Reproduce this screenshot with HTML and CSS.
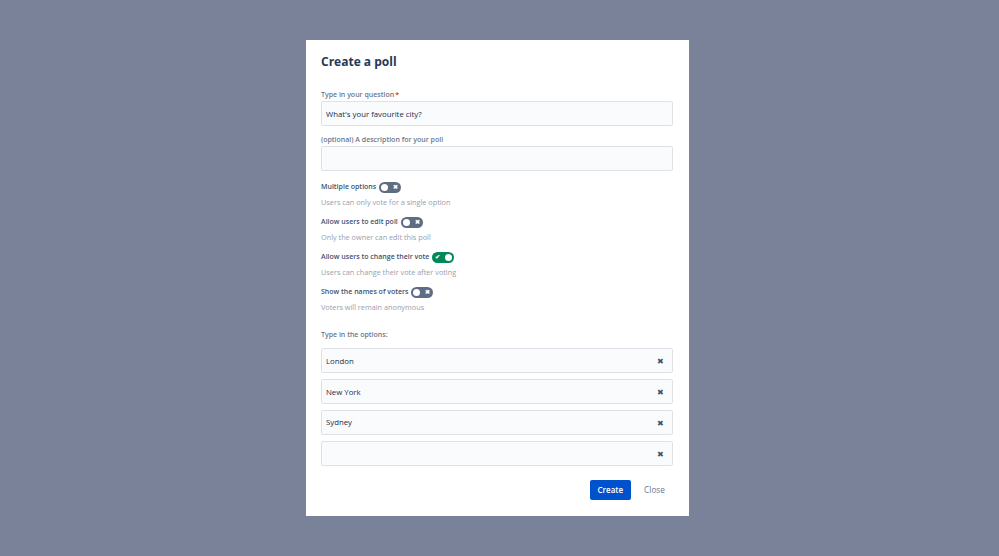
FILE: index.html
```html
<!DOCTYPE html>
<html lang="en">

    <head>
        <meta charset="UTF-8">
        <meta name="viewport" content="width=device-width, initial-scale=1.0">
        <title>Create a poll</title>
        <link rel="stylesheet" href="styles.css">
    </head>

    <body>
        <div class="modal">
            <h1>Create a poll</h1>
            <form id="poll-form">
                <label class="field-label" for="question">Type in your question<span class="required">*</span></label>
                <input class="text-input" type="text" id="question" value="What's your favourite city?">

                <label class="field-label" for="description">(optional) A description for your poll</label>
                <input class="text-input" type="text" id="description">

                <div class="setting">
                    <div class="setting-title">Multiple options <span class="toggle"></span></div>
                    <div class="setting-help">Users can only vote for a single option</div>
                </div>
                <div class="setting">
                    <div class="setting-title">Allow users to edit poll <span class="toggle"></span></div>
                    <div class="setting-help">Only the owner can edit this poll</div>
                </div>
                <div class="setting">
                    <div class="setting-title">Allow users to change their vote <span class="toggle on"></span></div>
                    <div class="setting-help">Users can change their vote after voting</div>
                </div>
                <div class="setting">
                    <div class="setting-title">Show the names of voters <span class="toggle"></span></div>
                    <div class="setting-help">Voters will remain anonymous</div>
                </div>

                <div class="options-label">Type in the options:</div>
                <div class="options">
                    <div class="option"><input type="text" value="London"><span class="remove">&#x2716;</span></div>
                    <div class="option"><input type="text" value="New York"><span class="remove">&#x2716;</span></div>
                    <div class="option"><input type="text" value="Sydney"><span class="remove">&#x2716;</span></div>
                    <div class="option"><input type="text" value=""><span class="remove">&#x2716;</span></div>
                </div>

                <div class="actions">
                    <button type="submit" class="btn-primary">Create</button>
                    <button type="button" class="btn-link">Close</button>
                </div>
            </form>
        </div>
    </body>

</html>
```

FILE: styles.css
```css
body {
    font-family: "Open Sans", "Noto Sans", Arial, sans-serif;
    background-color: #7a8299;
    margin: 0;
    padding: 0;
    display: flex;
    justify-content: center;
    align-items: center;
    height: 100vh;
    color: #172b4d;
}

.modal {
    background: #fff;
    width: 352px;
    padding: 14px 16px 16px 15px;
    margin-right: 4px;
    box-sizing: content-box;
}

h1 {
    font-size: 12px;
    font-weight: 700;
    margin: 0 0 20px;
    line-height: 16px;
    color: #253858;
}

form {
    margin: 0;
}

.field-label {
    display: block;
    font-size: 7px;
    font-weight: 600;
    color: #6b778c;
    line-height: 10px;
    margin-bottom: 1px;
}

.required {
    color: #de350b;
    margin-left: 1px;
}

.text-input,
.option {
    width: 100%;
    box-sizing: border-box;
    height: 25px;
    background: #fafbfc;
    border: 1px solid #dfe1e6;
    border-radius: 2px;
}

.text-input {
    display: block;
    padding: 0 4px;
    font-family: inherit;
    font-size: 7.8px;
    color: #172b4d;
    margin-bottom: 9px;
    outline: none;
}

.text-input + .field-label + .text-input {
    margin-bottom: 10px;
}

.setting {
    margin-bottom: 9px;
}

.setting-title {
    font-size: 7px;
    font-weight: 600;
    color: #42526e;
    line-height: 12px;
    display: flex;
    align-items: center;
    gap: 3px;
}

.setting-help {
    font-size: 7.3px;
    color: #97a0af;
    line-height: 10px;
    margin-top: 4px;
}

.toggle {
    position: relative;
    display: inline-block;
    width: 22px;
    height: 11px;
    border-radius: 6px;
    background: #5e6c84;
}

.toggle::before {
    content: "";
    position: absolute;
    left: 2px;
    top: 2px;
    width: 7px;
    height: 7px;
    border-radius: 50%;
    background: #fff;
}

.toggle::after {
    content: "\2716";
    position: absolute;
    right: 3px;
    top: 0;
    font-size: 6px;
    line-height: 11px;
    color: #fff;
}

.toggle.on {
    background: #00875a;
}

.toggle.on::before {
    left: auto;
    right: 2px;
}

.toggle.on::after {
    content: "\2714";
    right: auto;
    left: 3px;
}

.options-label {
    font-size: 7px;
    font-weight: 600;
    color: #6b778c;
    line-height: 10px;
    margin-top: 18px;
    margin-bottom: 8px;
}

.options {
    display: flex;
    flex-direction: column;
    gap: 5.7px;
}

.option {
    display: flex;
    align-items: center;
    padding: 0 8px 0 4px;
}

.option input {
    flex: 1;
    border: none;
    background: transparent;
    font-family: inherit;
    font-size: 7.8px;
    color: #172b4d;
    padding: 0;
    outline: none;
}

.remove {
    font-size: 8px;
    color: #42526e;
}

.actions {
    display: flex;
    justify-content: flex-end;
    align-items: center;
    gap: 5px;
    margin-top: 14px;
}

.btn-primary {
    background-color: #0052cc;
    color: #fff;
    border: none;
    border-radius: 2px;
    height: 20px;
    padding: 0 8px;
    font-family: inherit;
    font-size: 8px;
    font-weight: 600;
    cursor: pointer;
}

.btn-link {
    background: none;
    border: none;
    color: #6b778c;
    height: 20px;
    padding: 0 8px;
    font-family: inherit;
    font-size: 8.3px;
    cursor: pointer;
}
```
